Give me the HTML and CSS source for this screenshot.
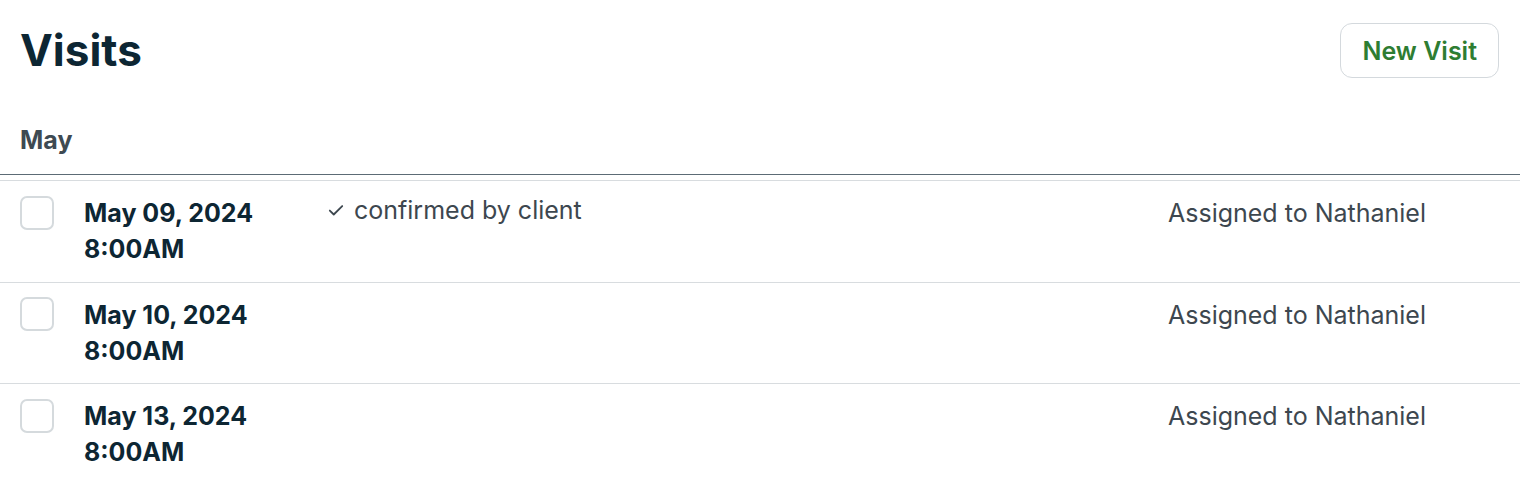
FILE: index.html
```html
<!DOCTYPE html>
<html>
<head>
<meta charset="utf-8">
<link rel="stylesheet" href="styles.css">
</head>
<body>
<div class="page">
  <header class="top">
    <h1 class="title">Visits</h1>
    <button class="btn">New Visit</button>
  </header>
  <div class="group">
    <div class="group-head">May</div>
    <ul class="list">
      <li class="row">
        <span class="check"></span>
        <div class="when"><div>May 09, 2024</div><div>8:00AM</div></div>
        <div class="status"><svg class="tick" viewBox="0 0 16 16" width="18" height="18"><path d="M2.5 8.5l3.5 3.5 7.5-7.5" fill="none" stroke="#3d474f" stroke-width="1.6" stroke-linecap="round" stroke-linejoin="round"/></svg>confirmed by client</div>
        <div class="assignee">Assigned to Nathaniel</div>
      </li>
      <li class="row">
        <span class="check"></span>
        <div class="when"><div>May 10, 2024</div><div>8:00AM</div></div>
        <div class="status"></div>
        <div class="assignee">Assigned to Nathaniel</div>
      </li>
      <li class="row">
        <span class="check"></span>
        <div class="when"><div>May 13, 2024</div><div>8:00AM</div></div>
        <div class="status"></div>
        <div class="assignee">Assigned to Nathaniel</div>
      </li>
    </ul>
  </div>
</div>
</body>
</html>
```

FILE: styles.css
```css
* { box-sizing: border-box; }
html, body { margin: 0; padding: 0; background: #fff; }
body { font-family: Inter, "Noto Sans", sans-serif; color: #0d2633; }
.page { padding: 23px 20px 0 20px; }
.top { display: flex; justify-content: space-between; align-items: center; }
.title { margin: 0; font-size: 44px; font-weight: 700; color: #0d2633; line-height: 1.2; }
.btn {
  font-family: Inter, sans-serif; font-size: 25px; font-weight: 600; color: #2e7d32;
  background: #fff; border: 1px solid #d4d9dd; border-radius: 12px;
  height: 55px; padding: 0 21px; margin-right: 1px;
}
.group { margin-top: 47px; }
.group-head { font-size: 25px; font-weight: 700; color: #3e4a52; line-height: normal; padding: 0 0 19px 20px; border-bottom: 1px solid #5c6b75; margin: 0 -20px; }
.list { list-style: none; margin: 5px -20px 0; padding: 0; border-top: 1px solid #d8dcdf; }
.row { display: flex; align-items: flex-start; padding: 14px 20px 14.5px; border-bottom: 1px solid #d8dcdf; }
.row:last-child { border-bottom: none; }
.check { width: 34px; height: 34px; border: 2px solid #d5dadd; border-radius: 7px; flex: none; margin-top: 0.5px; }
.when { margin-left: 30px; width: 243px; font-size: 25px; font-weight: 700; line-height: 36px; color: #0d2633; }
.status { flex: 1; font-size: 25px; line-height: 30px; color: #3d474f; display: flex; align-items: center; }
.tick { margin-right: 9px; }
.assignee { width: 332px; font-size: 25px; line-height: 36px; color: #3d474f; }
```
